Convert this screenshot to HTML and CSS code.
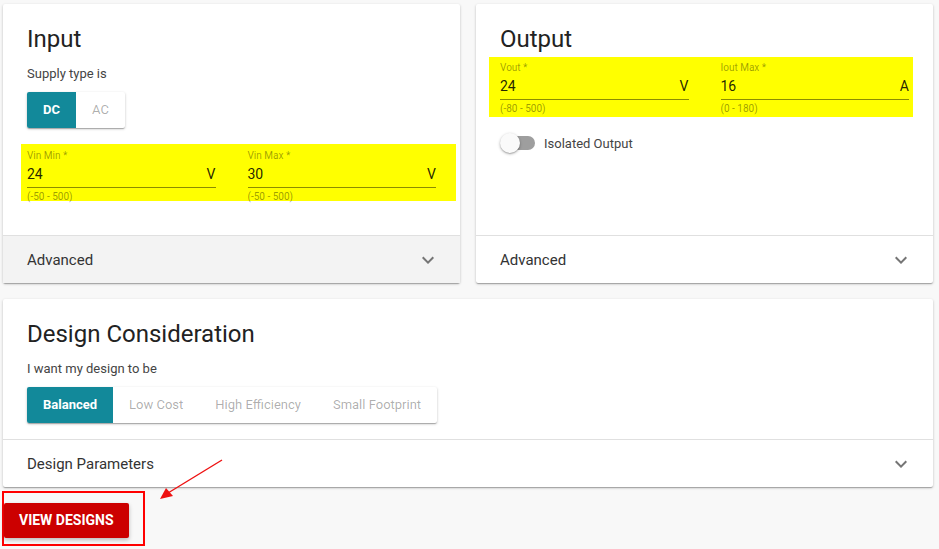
FILE: index.html
```html
<!DOCTYPE html>
<html lang="en">
<head>
    <meta charset="UTF-8">
    <title>Power Designer</title>
    <link rel="stylesheet" href="styles.css">
</head>
<body>
<div class="page">
    <div class="card-row">
        <!-- input side -->
        <div class="card">
            <div class="card-body input-body">
                <h2 class="card-title">Input</h2>
                <p class="card-hint">Supply type is</p>
                <div class="btn-group">
                    <span class="btn-opt active">DC</span>
                    <span class="btn-opt">AC</span>
                </div>
                <div class="fields fields-in">
                    <div class="field">
                        <div class="field-label">Vin Min *</div>
                        <div class="field-input"><span>24</span><span>V</span></div>
                        <div class="field-help">(-50 - 500)</div>
                    </div>
                    <div class="field">
                        <div class="field-label">Vin Max *</div>
                        <div class="field-input"><span>30</span><span>V</span></div>
                        <div class="field-help">(-50 - 500)</div>
                    </div>
                </div>
            </div>
            <div class="panel-head grey">
                <span>Advanced</span>
                <svg class="chevron" viewBox="0 0 24 24" width="24" height="24"><path d="M16.59 8.59L12 13.17 7.41 8.59 6 10l6 6 6-6z"/></svg>
            </div>
        </div>

        <!-- output side -->
        <div class="card">
            <div class="card-body">
                <h2 class="card-title">Output</h2>
                <div class="fields fields-out">
                    <div class="field">
                        <div class="field-label">Vout *</div>
                        <div class="field-input"><span>24</span><span>V</span></div>
                        <div class="field-help">(-80 - 500)</div>
                    </div>
                    <div class="field">
                        <div class="field-label">Iout Max *</div>
                        <div class="field-input"><span>16</span><span>A</span></div>
                        <div class="field-help">(0 - 180)</div>
                    </div>
                </div>
                <label class="switch-row">
                    <span class="switch"><span class="switch-knob"></span></span>
                    Isolated Output
                </label>
            </div>
            <div class="panel-head">
                <span>Advanced</span>
                <svg class="chevron" viewBox="0 0 24 24" width="24" height="24"><path d="M16.59 8.59L12 13.17 7.41 8.59 6 10l6 6 6-6z"/></svg>
            </div>
        </div>
    </div>

    <div class="card card-wide">
        <div class="card-body">
            <h2 class="card-title">Design Consideration</h2>
            <p class="card-hint">I want my design to be</p>
            <div class="btn-group">
                <span class="btn-opt active">Balanced</span>
                <span class="btn-opt">Low Cost</span>
                <span class="btn-opt">High Efficiency</span>
                <span class="btn-opt">Small Footprint</span>
            </div>
        </div>
        <div class="panel-head">
            <span>Design Parameters</span>
            <svg class="chevron" viewBox="0 0 24 24" width="24" height="24"><path d="M16.59 8.59L12 13.17 7.41 8.59 6 10l6 6 6-6z"/></svg>
        </div>
    </div>

    <div class="mark-box">
        <a class="btn-view" href="javascript:void(0);">VIEW DESIGNS</a>
    </div>

    <!-- pointer arrow -->
    <svg class="mark-arrow" width="80" height="50" viewBox="0 0 80 50">
        <line x1="68" y1="3" x2="14" y2="36" stroke="#ee1111" stroke-width="1.4"/>
        <polygon points="6,42 12,31 19,39" fill="#ee1111"/>
    </svg>
</div>
</body>
</html>
```

FILE: styles.css
```css
html, body {
    margin: 0;
    padding: 0;
    background: #f8f8f8;
    font-family: Roboto, "Liberation Sans", sans-serif;
    color: rgba(0, 0, 0, 0.87);
}
h2, p {
    margin: 0;
}
.page {
    position: relative;
    padding: 4px 6px 0 3px;
}
.card-row {
    display: flex;
    gap: 16px;
}
.card {
    flex: 1;
    display: flex;
    flex-direction: column;
    background: #ffffff;
    border-radius: 2px;
    box-shadow: 0 1px 3px rgba(0, 0, 0, 0.2), 0 1px 1px rgba(0, 0, 0, 0.14), 0 2px 1px -1px rgba(0, 0, 0, 0.12);
}
.card-wide {
    margin-top: 16px;
}
.card-body {
    flex: 1;
    padding: 19px 24px 16px 24px;
}
.card-title {
    font-size: 24px;
    line-height: 32px;
    font-weight: 400;
    color: #222;
}
.card-hint {
    margin-top: 9px;
    font-size: 13px;
    line-height: 20px;
    color: #444;
}
.btn-group {
    display: inline-flex;
    margin-top: 8px;
    border-radius: 2px;
    background: #fff;
    box-shadow: 0 1px 3px rgba(0, 0, 0, 0.2), 0 1px 1px rgba(0, 0, 0, 0.14), 0 2px 1px -1px rgba(0, 0, 0, 0.12);
    overflow: hidden;
}
.btn-opt {
    height: 36px;
    line-height: 36px;
    padding: 0 16px;
    font-size: 13px;
    color: rgba(0, 0, 0, 0.32);
}
.btn-opt.active {
    background: #12899a;
    color: #fff;
    font-weight: 700;
}

/* yellow highlighted input rows */
.fields {
    display: flex;
    gap: 32px;
    background: #ffff00;
}
.fields-in {
    margin: 16px -20px 18px -6px;
    padding: 6px 20px 0 6px;
    height: 51px;
}
.fields-out {
    margin: 2px -4px 0 -11px;
    padding: 5px 4px 2px 11px;
}
.field {
    flex: 1;
}
.field-label {
    font-size: 10px;
    line-height: 12px;
    color: rgba(0, 0, 0, 0.38);
}
.field-input {
    display: flex;
    justify-content: space-between;
    font-size: 14px;
    line-height: 22px;
    padding: 1px 0 2px 0;
    border-bottom: 1px solid rgba(0, 0, 0, 0.45);
}
.field-help {
    margin-top: 3px;
    font-size: 10px;
    line-height: 12px;
    color: rgba(0, 0, 0, 0.4);
}

.switch-row {
    display: flex;
    align-items: center;
    gap: 9px;
    margin-top: 16px;
    height: 20px;
    font-size: 13px;
    color: #444;
}
.switch {
    position: relative;
    width: 34px;
    height: 14px;
    margin-left: 1px;
    border-radius: 7px;
    background: #9e9e9e;
}
.switch-knob {
    position: absolute;
    left: -1px;
    top: -3px;
    width: 20px;
    height: 20px;
    border-radius: 50%;
    background: #fafafa;
    box-shadow: 0 1px 3px rgba(0, 0, 0, 0.3), 0 1px 1px rgba(0, 0, 0, 0.14);
}

.panel-head {
    display: flex;
    align-items: center;
    justify-content: space-between;
    height: 47px;
    padding: 0 20px 0 24px;
    border-top: 1px solid #e0e0e0;
    font-size: 15px;
    color: #333;
}
.panel-head.grey {
    background: #f3f3f3;
}
.chevron {
    fill: #757575;
}

.mark-box {
    display: inline-block;
    margin: 4px 0 0 -1px;
    padding: 10px 14px 6px 0;
    border: 2px solid #ff0000;
}
.btn-view {
    display: block;
    height: 35px;
    line-height: 35px;
    padding: 0 15px;
    background: #cc0000;
    color: #fff;
    font-size: 14px;
    font-weight: 700;
    text-decoration: none;
    border-radius: 2px;
    box-shadow: 0 2px 4px rgba(0, 0, 0, 0.25);
}
.mark-arrow {
    position: absolute;
    left: 154px;
    top: 457px;
}
```
